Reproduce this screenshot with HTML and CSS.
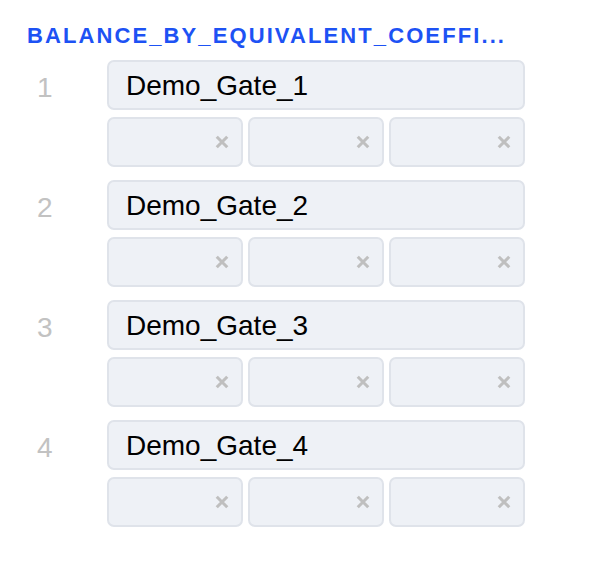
FILE: index.html
```html
<!DOCTYPE html>
<html>
<head>
<meta charset="utf-8">
<link rel="stylesheet" href="styles.css">
</head>
<body>
<div class="panel">
  <div class="title">BALANCE_BY_EQUIVALENT_COEFFI...</div>
  <div class="list">
    <div class="row">
      <div class="num">1</div>
      <div class="fields">
        <div class="name">Demo_Gate_1</div>
        <div class="subs">
          <div class="sub"><svg class="x" viewBox="0 0 12 12"><path d="M1.5 1.5L10.5 10.5M10.5 1.5L1.5 10.5"/></svg></div>
          <div class="sub"><svg class="x" viewBox="0 0 12 12"><path d="M1.5 1.5L10.5 10.5M10.5 1.5L1.5 10.5"/></svg></div>
          <div class="sub"><svg class="x" viewBox="0 0 12 12"><path d="M1.5 1.5L10.5 10.5M10.5 1.5L1.5 10.5"/></svg></div>
        </div>
      </div>
    </div>
    <div class="row">
      <div class="num">2</div>
      <div class="fields">
        <div class="name">Demo_Gate_2</div>
        <div class="subs">
          <div class="sub"><svg class="x" viewBox="0 0 12 12"><path d="M1.5 1.5L10.5 10.5M10.5 1.5L1.5 10.5"/></svg></div>
          <div class="sub"><svg class="x" viewBox="0 0 12 12"><path d="M1.5 1.5L10.5 10.5M10.5 1.5L1.5 10.5"/></svg></div>
          <div class="sub"><svg class="x" viewBox="0 0 12 12"><path d="M1.5 1.5L10.5 10.5M10.5 1.5L1.5 10.5"/></svg></div>
        </div>
      </div>
    </div>
    <div class="row">
      <div class="num">3</div>
      <div class="fields">
        <div class="name">Demo_Gate_3</div>
        <div class="subs">
          <div class="sub"><svg class="x" viewBox="0 0 12 12"><path d="M1.5 1.5L10.5 10.5M10.5 1.5L1.5 10.5"/></svg></div>
          <div class="sub"><svg class="x" viewBox="0 0 12 12"><path d="M1.5 1.5L10.5 10.5M10.5 1.5L1.5 10.5"/></svg></div>
          <div class="sub"><svg class="x" viewBox="0 0 12 12"><path d="M1.5 1.5L10.5 10.5M10.5 1.5L1.5 10.5"/></svg></div>
        </div>
      </div>
    </div>
    <div class="row">
      <div class="num">4</div>
      <div class="fields">
        <div class="name">Demo_Gate_4</div>
        <div class="subs">
          <div class="sub"><svg class="x" viewBox="0 0 12 12"><path d="M1.5 1.5L10.5 10.5M10.5 1.5L1.5 10.5"/></svg></div>
          <div class="sub"><svg class="x" viewBox="0 0 12 12"><path d="M1.5 1.5L10.5 10.5M10.5 1.5L1.5 10.5"/></svg></div>
          <div class="sub"><svg class="x" viewBox="0 0 12 12"><path d="M1.5 1.5L10.5 10.5M10.5 1.5L1.5 10.5"/></svg></div>
        </div>
      </div>
    </div>
  </div>
</div>
</body>
</html>
```

FILE: styles.css
```css
html, body {
  margin: 0;
  padding: 0;
  background: #ffffff;
  font-family: "Liberation Sans", Arial, sans-serif;
}

.panel {
  padding: 24px 0 0 27px;
  width: 498px;
}

.title {
  font-size: 22px;
  line-height: 24px;
  font-weight: bold;
  color: #1d52f4;
  letter-spacing: 2.1px;
  white-space: nowrap;
}

.list {
  margin-top: 12px;
  display: flex;
  flex-direction: column;
  gap: 13px;
}

.row {
  display: flex;
}

.num {
  width: 70px;
  padding-left: 10px;
  padding-top: 3px;
  font-size: 28px;
  line-height: 50px;
  color: #c2c2c2;
}

.fields {
  flex: 1;
  display: flex;
  flex-direction: column;
  gap: 7px;
}

.name {
  box-sizing: border-box;
  height: 50px;
  padding-left: 17px;
  border: 2px solid #dfe3ea;
  border-radius: 7px;
  background: #eef1f6;
  font-size: 28px;
  line-height: 47px;
  color: #000000;
}

.subs {
  display: grid;
  grid-template-columns: repeat(3, 1fr);
  gap: 5px;
}

.sub {
  box-sizing: border-box;
  height: 50px;
  border: 2px solid #dfe3ea;
  border-radius: 7px;
  background: #eef1f6;
  display: flex;
  align-items: center;
  justify-content: flex-end;
  padding-right: 12px;
}

.x {
  width: 14px;
  height: 14px;
}

.x path {
  stroke: #bfbfbf;
  stroke-width: 2.6;
  fill: none;
}
```
